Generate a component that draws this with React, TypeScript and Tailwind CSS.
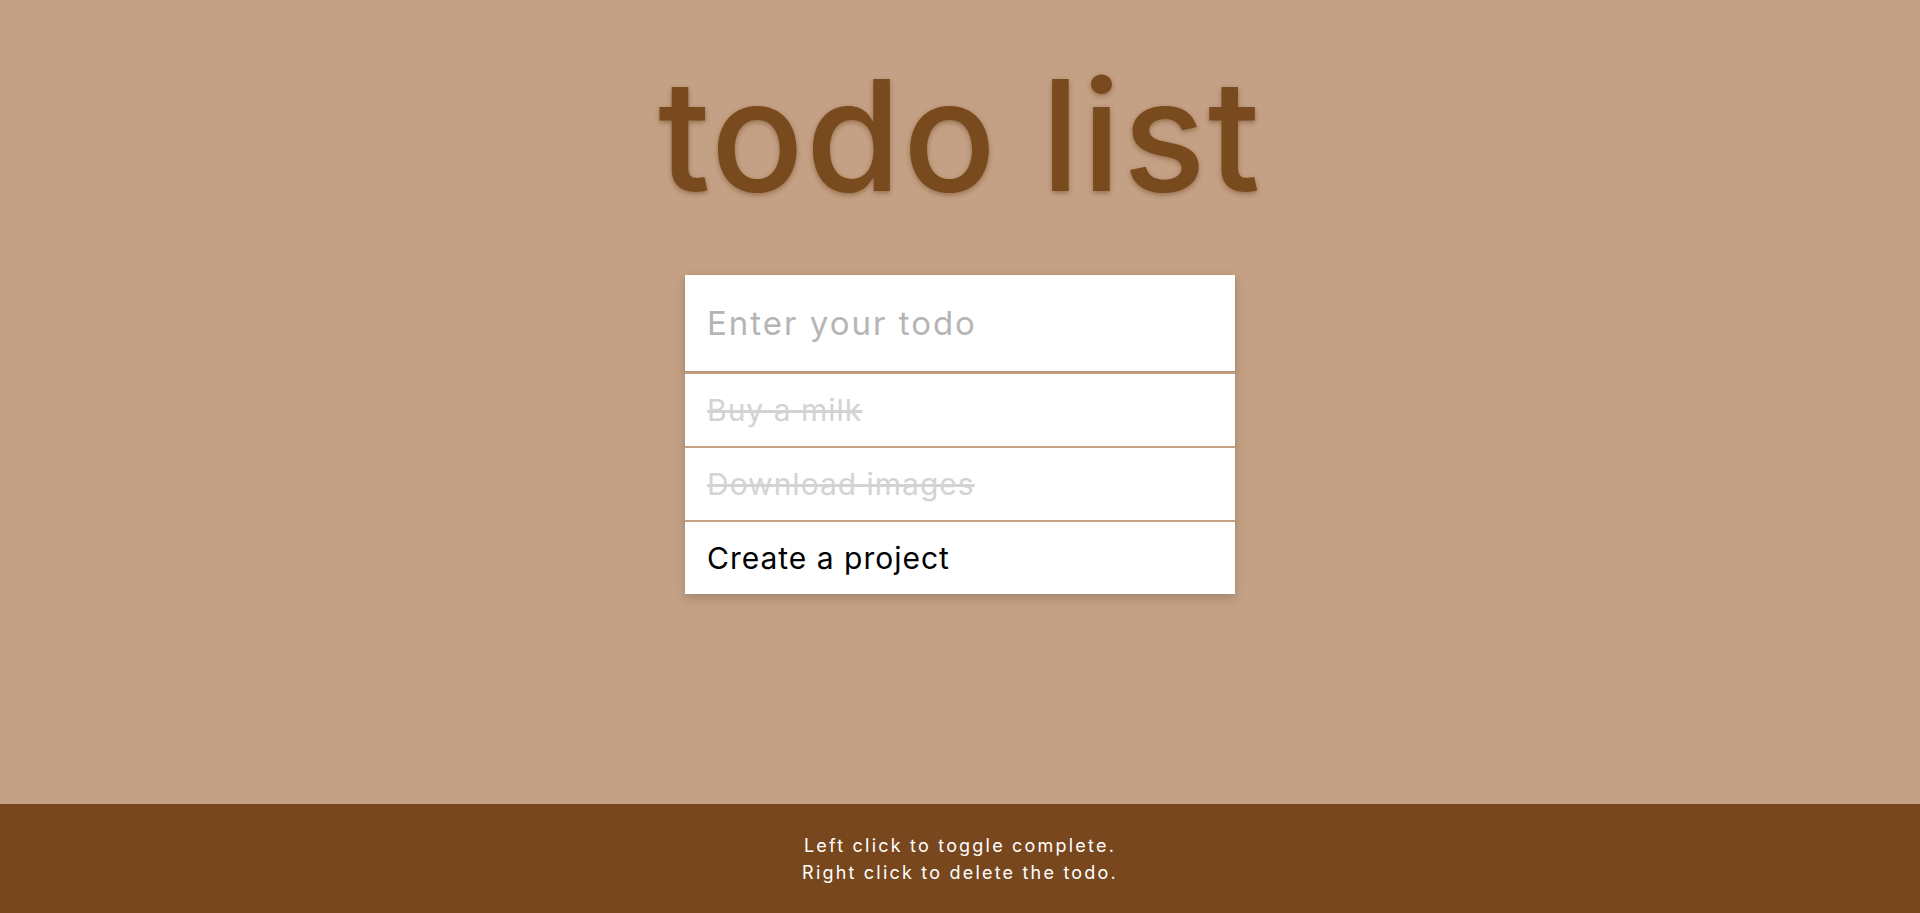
const todos = [
  { text: "Buy a milk", done: true },
  { text: "Download images", done: true },
  { text: "Create a project", done: false },
];

export default function App() {
  return (
    <div className="min-h-screen flex flex-col bg-[#c4a184] font-['Inter','Liberation_Sans',sans-serif]">
      <main className="flex-1 flex flex-col items-center">
        <h1 className="mt-[58px] text-[154px] leading-none font-medium tracking-[2px] text-[#7a4a1f] [text-shadow:0_2px_5px_rgba(90,50,15,0.45)]">
          todo list
        </h1>
        <div className="mt-[63px] w-[550px] flex flex-col gap-[2px] shadow-[0_4px_10px_rgba(0,0,0,0.18)]">
          <input
            type="text"
            placeholder="Enter your todo"
            className="h-[96px] w-full bg-white px-[22px] text-[33px] tracking-[2px] text-black outline-none placeholder:text-[#b5b5b5] mb-[1px] shadow-[0_1px_2px_rgba(0,0,0,0.12)]"
          />
          {todos.map((t) => (
            <div
              key={t.text}
              className={
                t.done
                  ? "h-[72px] flex items-center bg-white px-[22px] text-[30px] tracking-[1px] text-[#d3d3d3] line-through"
                  : "h-[72px] flex items-center bg-white px-[22px] text-[30px] tracking-[1px] text-black"
              }
            >
              {t.text}
            </div>
          ))}
        </div>
      </main>
      <footer className="h-[109px] bg-[#78471e] flex flex-col items-center justify-center text-white text-[18px] leading-[27px] tracking-[2.2px]">
        <p>Left click to toggle complete.</p>
        <p>Right click to delete the todo.</p>
      </footer>
    </div>
  );
}
